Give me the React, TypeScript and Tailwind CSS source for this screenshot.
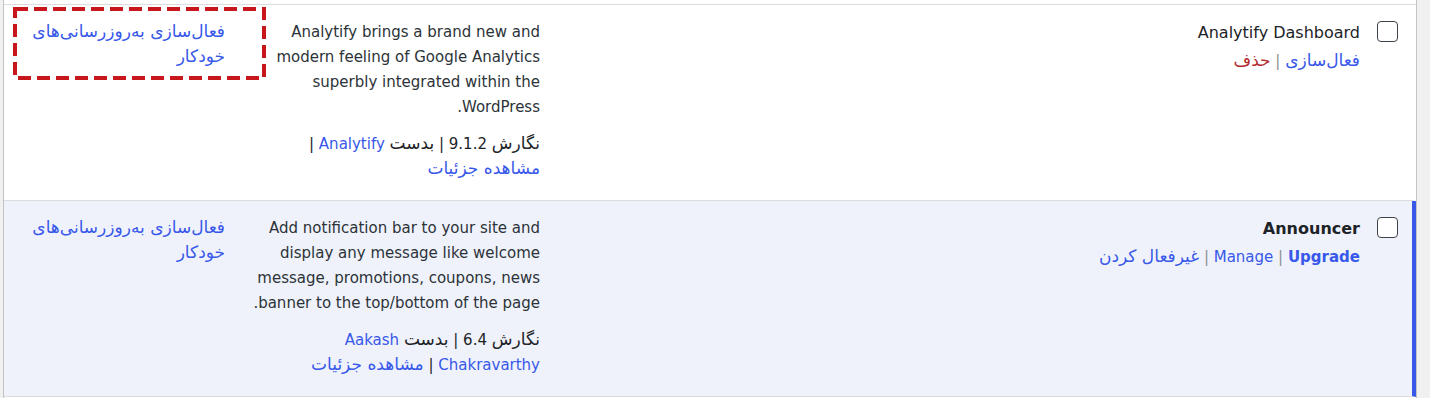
import React from "react";

type Plugin = {
  name: string;
  active: boolean;
  actions: React.ReactNode;
  description: string;
  version: string;
  author: string;
  highlight?: boolean;
};

// Persian runs are set a bit larger than Latin, like Tahoma does
function Fa({ children }: { children: React.ReactNode }) {
  return <span className="text-[17px] leading-none">{children}</span>;
}

const sep = <span className="text-[#8c8f94]"> | </span>;

const plugins: Plugin[] = [
  {
    name: "Analytify Dashboard",
    active: false,
    actions: (
      <>
        <bdi>
          <a className="text-[#3858e9]">
            <Fa>فعال‌سازی</Fa>
          </a>
        </bdi>
        {sep}
        <bdi>
          <a className="text-[#b32d2e]">
            <Fa>حذف</Fa>
          </a>
        </bdi>
      </>
    ),
    description:
      "Analytify brings a brand new and modern feeling of Google Analytics superbly integrated within the WordPress.",
    version: "9.1.2",
    author: "Analytify",
    highlight: true,
  },
  {
    name: "Announcer",
    active: true,
    actions: (
      <>
        <bdi>
          <a className="font-bold text-[#3858e9]">Upgrade</a>
        </bdi>
        {sep}
        <bdi>
          <a className="text-[#3858e9]">Manage</a>
        </bdi>
        {sep}
        <bdi>
          <a className="text-[#3858e9]">
            <Fa>غیرفعال کردن</Fa>
          </a>
        </bdi>
      </>
    ),
    description:
      "Add notification bar to your site and display any message like welcome message, promotions, coupons, news banner to the top/bottom of the page.",
    version: "6.4",
    author: "Aakash Chakravarthy",
  },
];

function PluginRow({ plugin }: { plugin: Plugin }) {
  return (
    <div
      className={
        "grid grid-cols-[52px_810px_308px_1fr] border-b border-r-4 border-b-[#dcdcde] pt-[15px] pb-[18px] " +
        (plugin.active
          ? "border-r-[#3858e9] bg-[#eff2fb]"
          : "border-r-white bg-white")
      }
    >
      <div className="pr-[14px] pt-[1px]">
        <span className="block h-[21px] w-[21px] rounded-[4px] border border-[#3c434a] bg-white" />
      </div>

      <div>
        <div
          className={
            "text-[16px] leading-[25px] text-[#1d2327] " +
            (plugin.active ? "font-bold" : "font-normal")
          }
        >
          {plugin.name}
        </div>
        <div className="mt-[4px] text-[15px] leading-[25px] text-[#8c8f94]">
          {plugin.actions}
        </div>
      </div>

      <div className="pr-[10px]">
        <p className="w-[294px] text-[15px] leading-[25px] text-[#2c3338]">
          {plugin.description}
        </p>
        <p className="mt-[12px] w-[294px] text-[15px] leading-[25px] text-[#1d2327]">
          <Fa>نگارش</Fa> {plugin.version} | <Fa>بدست</Fa>{" "}
          <a className="text-[#3858e9]">{plugin.author}</a> |{" "}
          <a className="whitespace-nowrap text-[#3858e9]">
            <Fa>مشاهده جزئیات</Fa>
          </a>
        </p>
      </div>

      <div className="relative pr-[17px]">
        <a className="block w-[212px] text-[15px] leading-[25px] text-[#3858e9]">
          <Fa>فعال‌سازی به‌روزرسانی‌های خودکار</Fa>
        </a>
        {plugin.highlight && (
          <svg
            className="absolute -top-[13px] left-[9px]"
            width="253"
            height="73"
            viewBox="0 0 253 73"
          >
            <rect
              x="2"
              y="2"
              width="249"
              height="69"
              fill="none"
              stroke="#c8161d"
              strokeWidth="4"
              strokeDasharray="13 6"
            />
          </svg>
        )}
      </div>
    </div>
  );
}

export default function App() {
  return (
    <div
      dir="rtl"
      className="min-h-screen bg-[#f0f0f1] pl-[3px] pr-[13px] font-['DejaVu_Sans',sans-serif]"
    >
      <div className="min-h-screen border-x border-[#c3c4c7] bg-white">
        <div className="h-[5px] border-b border-[#dcdcde] bg-white" />
        {plugins.map((p) => (
          <PluginRow key={p.name} plugin={p} />
        ))}
      </div>
    </div>
  );
}
